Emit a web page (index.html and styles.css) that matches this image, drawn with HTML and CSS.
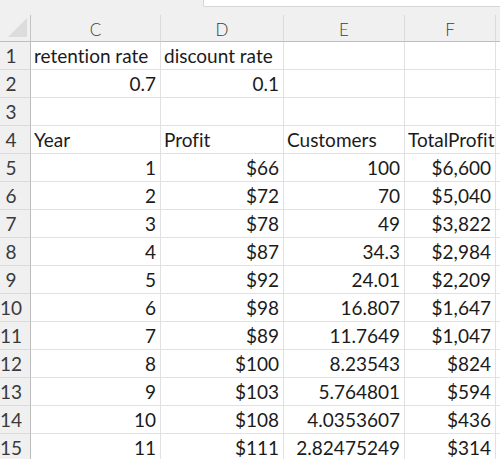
FILE: index.html
```html
<!DOCTYPE html>
<html>
<head>
<meta charset="utf-8">
<link rel="stylesheet" href="styles.css">
</head>
<body>
<div class="topstrip"><div class="namebox"></div></div>
<div class="grid">
  <div class="corner"><span class="tri"></span></div>
  <div class="ch">C</div><div class="ch">D</div><div class="ch">E</div><div class="ch">F</div><div class="ch last"></div>

  <div class="rh">1</div><div class="c">retention rate</div><div class="c">discount rate</div><div class="c"></div><div class="c"></div><div class="c"></div>
  <div class="rh">2</div><div class="c n">0.7</div><div class="c n">0.1</div><div class="c"></div><div class="c"></div><div class="c"></div>
  <div class="rh">3</div><div class="c"></div><div class="c"></div><div class="c"></div><div class="c"></div><div class="c"></div>
  <div class="rh">4</div><div class="c">Year</div><div class="c">Profit</div><div class="c">Customers</div><div class="c">TotalProfit</div><div class="c"></div>
  <div class="rh">5</div><div class="c n">1</div><div class="c n">$66</div><div class="c n">100</div><div class="c n">$6,600</div><div class="c"></div>
  <div class="rh">6</div><div class="c n">2</div><div class="c n">$72</div><div class="c n">70</div><div class="c n">$5,040</div><div class="c"></div>
  <div class="rh">7</div><div class="c n">3</div><div class="c n">$78</div><div class="c n">49</div><div class="c n">$3,822</div><div class="c"></div>
  <div class="rh">8</div><div class="c n">4</div><div class="c n">$87</div><div class="c n">34.3</div><div class="c n">$2,984</div><div class="c"></div>
  <div class="rh">9</div><div class="c n">5</div><div class="c n">$92</div><div class="c n">24.01</div><div class="c n">$2,209</div><div class="c"></div>
  <div class="rh">10</div><div class="c n">6</div><div class="c n">$98</div><div class="c n">16.807</div><div class="c n">$1,647</div><div class="c"></div>
  <div class="rh">11</div><div class="c n">7</div><div class="c n">$89</div><div class="c n">11.7649</div><div class="c n">$1,047</div><div class="c"></div>
  <div class="rh">12</div><div class="c n">8</div><div class="c n">$100</div><div class="c n">8.23543</div><div class="c n">$824</div><div class="c"></div>
  <div class="rh">13</div><div class="c n">9</div><div class="c n">$103</div><div class="c n">5.764801</div><div class="c n">$594</div><div class="c"></div>
  <div class="rh">14</div><div class="c n">10</div><div class="c n">$108</div><div class="c n">4.0353607</div><div class="c n">$436</div><div class="c"></div>
  <div class="rh">15</div><div class="c n">11</div><div class="c n">$111</div><div class="c n">2.82475249</div><div class="c n">$314</div><div class="c"></div>
</div>
</body>
</html>
```
FILE: styles.css
```css
html, body {
  margin: 0;
  padding: 0;
  background: #ffffff;
  overflow: hidden;
}
body {
  font-family: Lato, "Liberation Sans", sans-serif;
  font-variant-ligatures: none;
  color: #1b1b1b;
  width: 500px;
  height: 459px;
}
.topstrip {
  height: 15px;
  background: #f0f0f0;
  display: flex;
  justify-content: flex-end;
  align-items: flex-start;
}
.namebox {
  width: 296px;
  height: 6px;
  background: #ffffff;
  border-left: 1px solid #d6d6d6;
  border-bottom: 1px solid #d6d6d6;
  border-bottom-left-radius: 2px;
}
.grid {
  display: grid;
  grid-template-columns: 31px 130px 123px 121px 91px 1fr;
  grid-template-rows: 27px;
  grid-auto-rows: 28px;
}
.grid > div {
  box-sizing: border-box;
  min-width: 0;
}
.corner {
  background: #f0f0f0;
  border-right: 1px solid #c4c4c4;
  border-bottom: 1px solid #bdbdbd;
  position: relative;
}
.tri {
  position: absolute;
  left: 8px;
  top: 3px;
  width: 0;
  height: 0;
  border-left: 19px solid transparent;
  border-bottom: 19px solid #dcdcdc;
}
.ch {
  background: #f0f0f0;
  border-right: 1px solid #dadada;
  border-bottom: 1px solid #bdbdbd;
  text-align: center;
  font-size: 17px;
  font-weight: 300;
  line-height: 27px;
  color: #3c3c3c;
  padding-top: 1px;
}
.ch.last { border-right: none; }
.rh {
  background: #f0f0f0;
  border-right: 1px solid #bdbdbd;
  border-bottom: 1px solid #dadada;
  font-size: 19px;
  line-height: 27px;
  color: #3a3a3a;
  text-align: center;
  padding-right: 8px;
}
.c {
  border-right: 1px solid #e1e1e1;
  border-bottom: 1px solid #e1e1e1;
  font-size: 19px;
  line-height: 27px;
  padding: 0 4px 0 3px;
  white-space: nowrap;
  overflow: visible;
  display: flex;
  justify-content: flex-start;
}
.c.n {
  justify-content: flex-end;
}
```
